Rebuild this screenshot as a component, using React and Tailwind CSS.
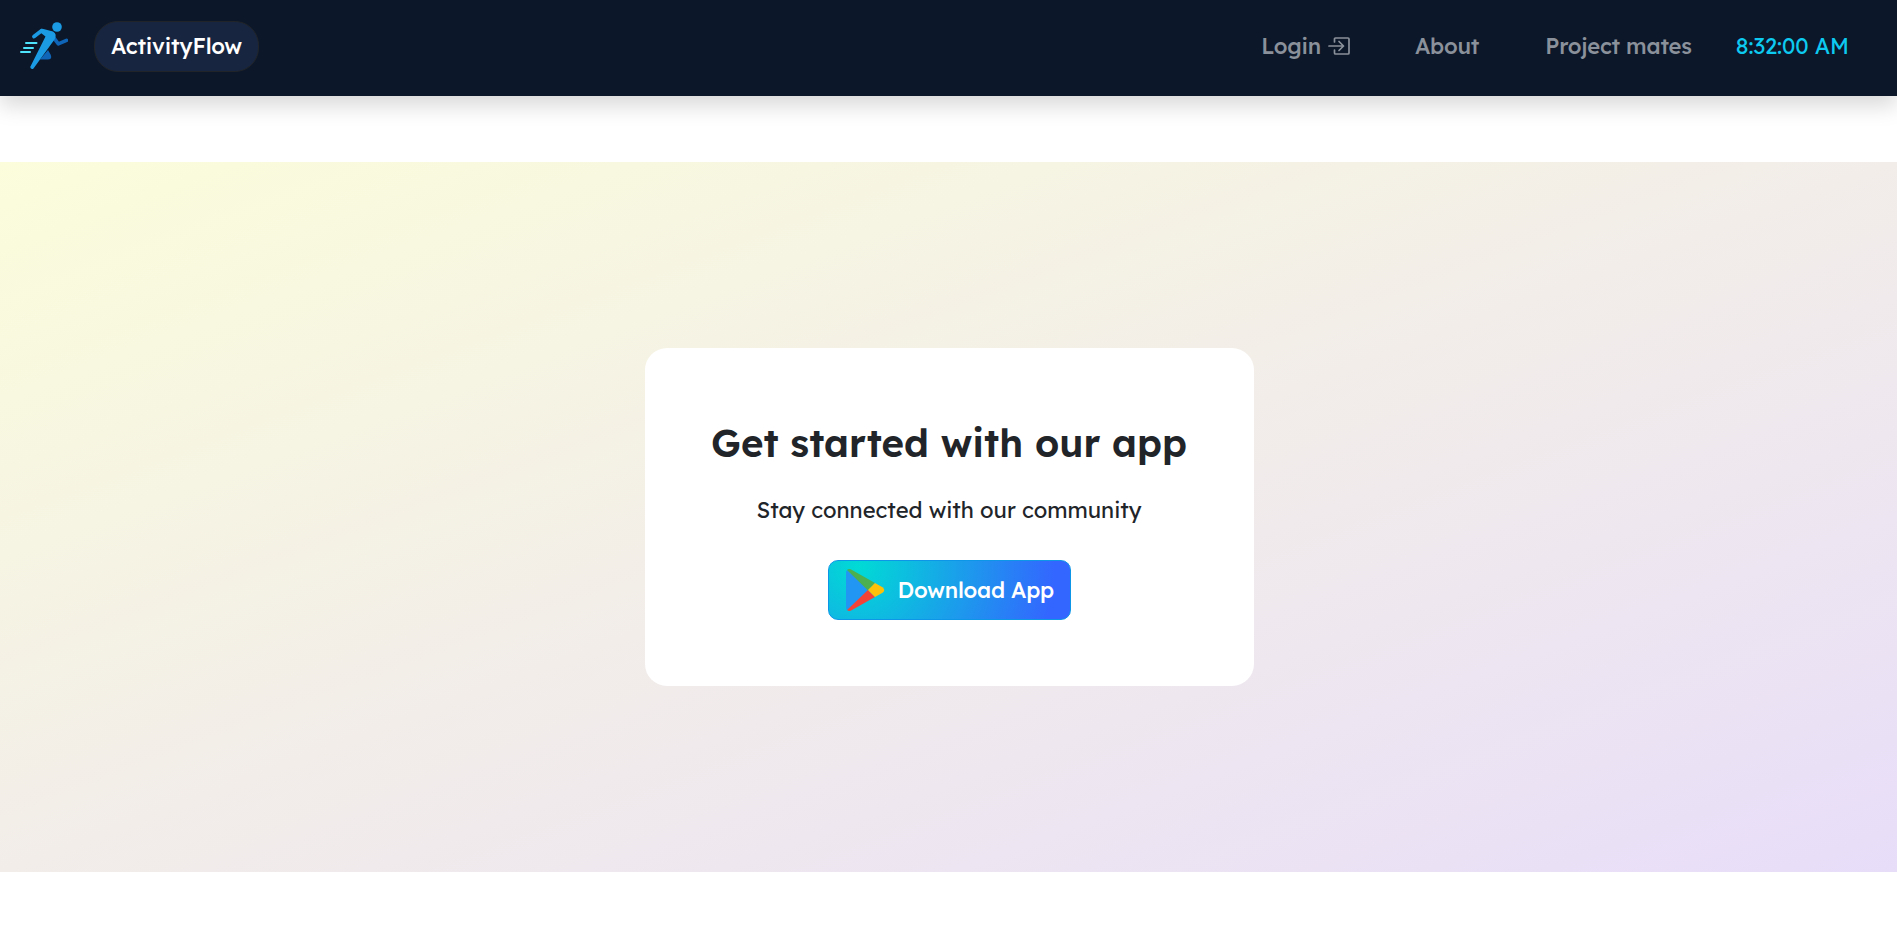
function Runner() {
  return (
    <svg className="block h-12 w-12" viewBox="0 0 48 48" fill="none" strokeLinecap="round" strokeLinejoin="round">
      <path d="M33 15 C35 17 36 19 38.300 21.800 L46.500 18.300" stroke="#0f65b8" strokeWidth="3.600" />
      <path d="M20 37.500 H27.500 Q32.500 37.500 30.800 33 L28 28 Z" fill="#0f65b8" />
      <path d="M14 14.500 L21.500 8.800" stroke="#1b9be4" strokeWidth="3.800" />
      <path d="M20.500 7 Q22 6.500 23.500 7 L33 9.500 Q37.500 12 34.500 17.500 L13.500 46.500 Q11 48 10.200 45 L25.500 14.500 L21 11 Z" fill="#1b9be4" />
      <circle cx="37" cy="5" r="4.800" fill="#1b9be4" />
      <path d="M6 21 H16.500 M4 26 H13 M1 30 H10" stroke="#4ee4fb" strokeWidth="2" />
    </svg>
  );
}

function LoginIcon() {
  return (
    <svg className="block h-[18px] w-[22px]" viewBox="0 0 22 18" fill="none" stroke="currentColor" strokeWidth="1.700" strokeLinecap="round" strokeLinejoin="round">
      <path d="M6.500 5 V2 Q6.500 1 7.500 1 H20 Q21 1 21 2 V16 Q21 17 20 17 H7.500 Q6.500 17 6.500 16 V13 M1 9 H15.500 M11 4.500 L15.500 9 L11 13.500" />
    </svg>
  );
}

function PlayLogo() {
  return (
    <svg className="block h-[42px] w-[40px] shrink-0" viewBox="0 0 40 42">
      <path d="M1 1 Q0 2 0 3.500 V38.500 Q0 40 1 41 L24 21 Z" fill="#2196f3" />
      <path d="M1 1 Q3 -1 6 1 L29 14 L22 21.500 Z" fill="#4caf50" />
      <path d="M1 41 Q3 43 6 41 L29 28 L22 21 Z" fill="#f44336" />
      <path d="M29 14 L36.500 18.200 Q40 21 36.500 23.800 L29 28 L22 21 Z" fill="#ffc107" />
    </svg>
  );
}

export default function App() {
  return (
    <div className="h-[933px] overflow-hidden bg-white font-[Lexend,Inter,'Open_Sans',sans-serif] text-[#212529]">
      <nav className="relative flex h-24 items-start justify-between bg-[#0c1729] pt-5 pr-12 pl-5 text-[22px] font-medium leading-[52px] shadow-[0_10px_20px_rgba(0,0,0,0.15)]">
        <div className="flex items-center gap-[26px]">
          <Runner />
          <a className="mt-px flex h-[51px] w-[165px] items-center justify-center rounded-[24px] border border-[#212529] bg-[#182540] pb-0.5 tracking-[-0.16px] text-white">ActivityFlow</a>
        </div>
        <div className="flex items-center tracking-[-0.22px] text-[#8b919b]">
          <a className="mr-[65px] flex items-center gap-[7px]">Login <LoginIcon /></a>
          <a className="mr-[66px]">About</a>
          <a className="mr-11">Project mates</a>
          <span className="font-normal tracking-[-0.05px] text-[#0dcaf0]">8:32:00 AM</span>
        </div>
      </nav>
      <main className="mt-[66px] flex h-[710px] items-center justify-center bg-[linear-gradient(to_bottom_right,#fbfddb,#f2ede9,#e8ddf9)]">
        <section className="ml-px flex h-[338px] w-[609px] flex-col items-center rounded-[22px] bg-white pt-[71px] whitespace-nowrap">
          <h1 className="text-[38.400px] font-semibold leading-12">Get started with our app</h1>
          <p className="mt-[27px] text-[22px] leading-[33px]">Stay connected with our community</p>
          <button className="mt-[33px] flex h-[60px] w-[243px] items-center rounded-[10px] border border-[#0d96e8] bg-[radial-gradient(circle_at_12%_10%,#00dbd5,#3366ff_90%)] pl-[17px] text-[22px] font-medium tracking-[-0.2px] text-white">
            <PlayLogo />
            <span className="ml-3">Download App</span>
          </button>
        </section>
      </main>
    </div>
  );
}
